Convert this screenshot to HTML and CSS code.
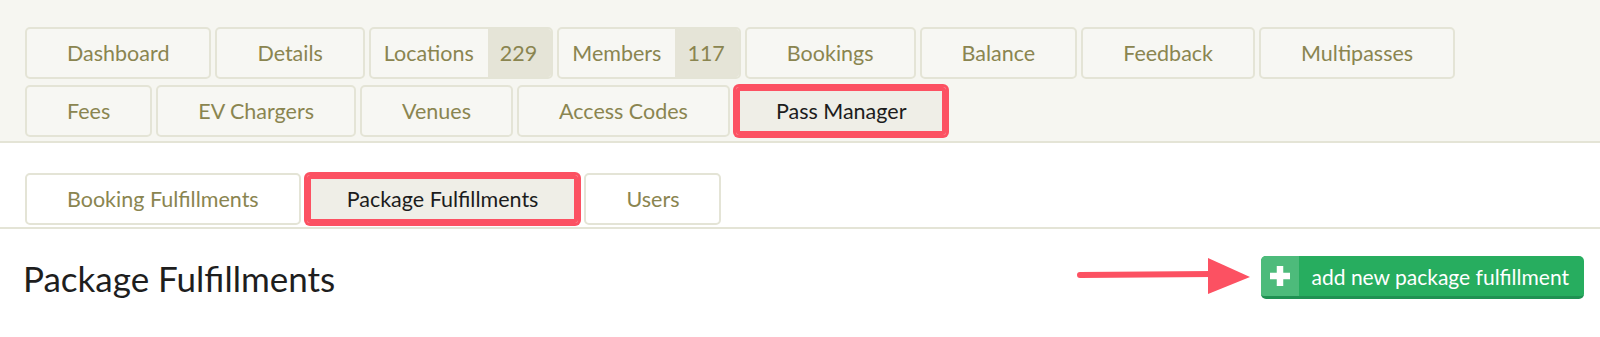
FILE: index.html
```html
<!DOCTYPE html>
<html lang="en">
<head>
<meta charset="utf-8">
<title>Package Fulfillments</title>
<link rel="stylesheet" href="styles.css">
</head>
<body>
<header class="top-nav">
  <div class="tab-rows">
    <nav class="tab-row">
      <a class="tab" href="#">Dashboard</a>
      <a class="tab" href="#">Details</a>
      <a class="tab tab-count" href="#"><span class="label">Locations</span><span class="count">229</span></a>
      <a class="tab tab-count" href="#"><span class="label">Members</span><span class="count">117</span></a>
      <a class="tab" href="#">Bookings</a>
      <a class="tab" href="#">Balance</a>
      <a class="tab" href="#">Feedback</a>
      <a class="tab" href="#">Multipasses</a>
    </nav>
    <nav class="tab-row">
      <a class="tab" href="#">Fees</a>
      <a class="tab" href="#">EV Chargers</a>
      <a class="tab" href="#">Venues</a>
      <a class="tab" href="#">Access Codes</a>
      <a class="tab active" href="#">Pass Manager</a>
    </nav>
  </div>
</header>
<nav class="sub-nav">
  <a class="tab sub" href="#">Booking Fulfillments</a>
  <a class="tab sub active" href="#">Package Fulfillments</a>
  <a class="tab sub" href="#">Users</a>
</nav>
<main class="page-head">
  <h1>Package Fulfillments</h1>
  <button class="btn-add" type="button">
    <span class="btn-icon"><svg width="22" height="22" viewBox="0 0 22 22"><path d="M11 1v20M1 11h20" stroke="#fff" stroke-width="6.5" fill="none"/></svg></span>
    <span class="btn-text">add new package fulfillment</span>
  </button>
  <svg class="annot-arrow" width="190" height="50" viewBox="0 0 190 50">
    <line x1="8" y1="22" x2="140" y2="21" stroke="#fc5162" stroke-width="6" stroke-linecap="round"/>
    <polygon points="136,5 178,24 136,41" fill="#fc5162"/>
  </svg>
</main>
</body>
</html>
```

FILE: styles.css
```css
* { box-sizing: border-box; }
body {
  margin: 0;
  background: #ffffff;
  font-family: Lato, "Open Sans", "Liberation Sans", sans-serif;
}
.top-nav {
  background: #f6f6f1;
  border-bottom: 2px solid #e4e4d6;
  padding: 27px 25px 4px;
}
.tab-rows {
  display: flex;
  flex-direction: column;
  gap: 6px;
}
.tab-row {
  display: flex;
  gap: 4px;
}
.tab {
  display: flex;
  align-items: center;
  height: 52px;
  padding: 0 40px;
  border: 2px solid #e4e4d6;
  border-radius: 5px;
  background: #f7f7f3;
  color: #8a8550;
  font-size: 21.5px;
  text-decoration: none;
  white-space: nowrap;
}
.tab-count {
  padding: 0;
  overflow: hidden;
}
.tab-count .label {
  padding: 0 14px 0 13px;
}
.tab-count .count {
  align-self: stretch;
  display: flex;
  align-items: center;
  padding: 0 14px 0 12px;
  background: #e5e4d7;
}
.tab.active {
  background: #efeee7;
  color: #1c1c1c;
  border-color: #fc5162;
  box-shadow: 0 0 0 1px #fc5162, inset 0 0 0 4px #fc5162;
}
.sub-nav {
  display: flex;
  gap: 4px;
  padding: 30px 25px 2px;
  border-bottom: 2px solid #e4e4d6;
}
.tab.sub {
  background: #ffffff;
}
.tab.sub.active {
  background: #efeee7;
}
.page-head {
  position: relative;
  display: flex;
  align-items: center;
  justify-content: space-between;
  padding: 27px 16px 0 23px;
}
.page-head h1 {
  margin: 0;
  font-size: 35px;
  font-weight: 400;
  color: #1e1e1e;
}
.btn-add {
  display: flex;
  align-items: stretch;
  height: 43px;
  padding: 0;
  border: none;
  border-bottom: 3px solid #1f9152;
  border-radius: 5px;
  background: #27ad5f;
  color: #ffffff;
  font-family: inherit;
  font-size: 21px;
  overflow: hidden;
  cursor: pointer;
}
.btn-icon {
  display: flex;
  align-items: center;
  justify-content: center;
  width: 38px;
  background: #4dbb7b;
}
.btn-text {
  display: flex;
  align-items: center;
  padding: 0 15px 0 13px;
}
.annot-arrow {
  position: absolute;
  left: 1072px;
  top: 24px;
}
```
